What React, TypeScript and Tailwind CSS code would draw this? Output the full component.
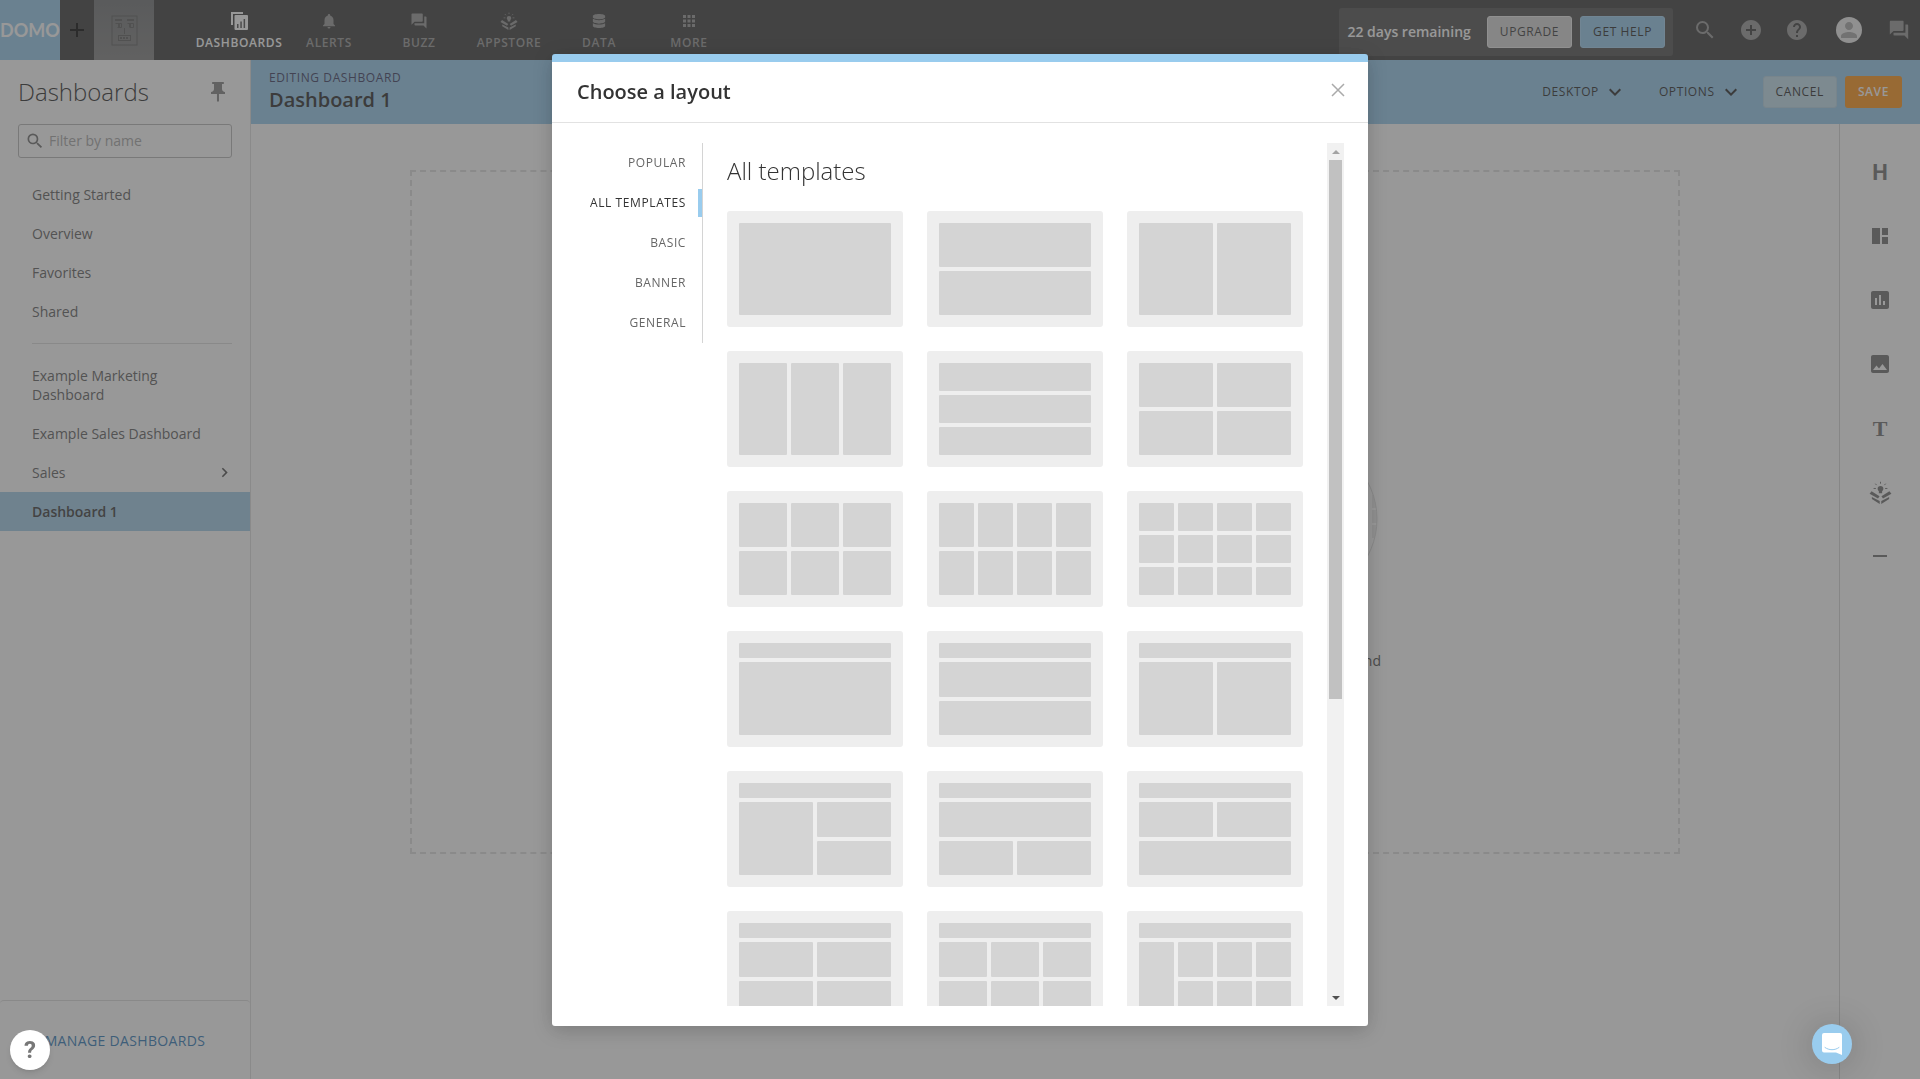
import { useState } from 'react';
import {
  MdAddCircle,
  MdApps,
  MdChevronRight,
  MdForum,
  MdHelp,
  MdImage,
  MdInsertChart,
  MdKeyboardArrowDown,
  MdNotifications,
  MdPerson,
  MdPushPin,
  MdSearch,
} from 'react-icons/md';
import { FaDatabase } from 'react-icons/fa';

interface Template {
  id: string;
  grid: string;
  cells: string[];
}

const fill = (count: number) => Array.from({ length: count }, () => '');

const templates: Template[] = [
  { id: 'single', grid: 'grid-cols-1 grid-rows-1', cells: fill(1) },
  { id: 'two-rows', grid: 'grid-cols-1 grid-rows-2', cells: fill(2) },
  { id: 'two-cols', grid: 'grid-cols-2 grid-rows-1', cells: fill(2) },
  { id: 'three-cols', grid: 'grid-cols-3 grid-rows-1', cells: fill(3) },
  { id: 'three-rows', grid: 'grid-cols-1 grid-rows-3', cells: fill(3) },
  { id: 'two-by-two', grid: 'grid-cols-2 grid-rows-2', cells: fill(4) },
  { id: 'three-by-two', grid: 'grid-cols-3 grid-rows-2', cells: fill(6) },
  { id: 'four-by-two', grid: 'grid-cols-4 grid-rows-2', cells: fill(8) },
  { id: 'four-by-three', grid: 'grid-cols-4 grid-rows-3', cells: fill(12) },
  { id: 'banner-single', grid: 'grid-cols-1 grid-rows-[15px_1fr]', cells: fill(2) },
  { id: 'banner-rows', grid: 'grid-cols-1 grid-rows-[15px_1fr_1fr]', cells: fill(3) },
  { id: 'banner-cols', grid: 'grid-cols-2 grid-rows-[15px_1fr]', cells: ['col-span-2', '', ''] },
  {
    id: 'banner-left-tall',
    grid: 'grid-cols-2 grid-rows-[15px_1fr_1fr]',
    cells: ['col-span-2', 'row-span-2', '', ''],
  },
  {
    id: 'banner-wide-top',
    grid: 'grid-cols-2 grid-rows-[15px_1fr_1fr]',
    cells: ['col-span-2', 'col-span-2', '', ''],
  },
  {
    id: 'banner-wide-bottom',
    grid: 'grid-cols-2 grid-rows-[15px_1fr_1fr]',
    cells: ['col-span-2', '', '', 'col-span-2'],
  },
  {
    id: 'banner-two-by-two',
    grid: 'grid-cols-2 grid-rows-[15px_1fr_1fr]',
    cells: ['col-span-2', ...fill(4)],
  },
  {
    id: 'banner-three-by-two',
    grid: 'grid-cols-3 grid-rows-[15px_1fr_1fr]',
    cells: ['col-span-3', ...fill(6)],
  },
  {
    id: 'banner-four-tall',
    grid: 'grid-cols-4 grid-rows-[15px_1fr_1fr]',
    cells: ['col-span-4', 'row-span-2', ...fill(6)],
  },
];

const categories = ['Popular', 'All templates', 'Basic', 'Banner', 'General'];

function AppstoreIcon({ className }: { className?: string }) {
  return (
    <svg viewBox="0 0 24 24" fill="currentColor" className={className}>
      <path d="M12 5.2a3 3 0 0 1 3 3c0 1.100-.6 1.900-1.300 2.400v2.200h-3.400v-2.200C9.600 10.100 9 9.300 9 8.200a3 3 0 0 1 3-3z" />
      <path d="M2.700 10.700 11 16l-1.600 2.300L.6 13.200zM21.300 10.700 13 16l1.600 2.300 8.800-5.100z" />
      <path d="m3 16.600 8.200 4.200V24L3 18.900zM21 16.600l-8.200 4.200V24l8.200-5.100z" />
      <path
        d="M12 .8v2M6.600 2.800l1.300 1.500M17.400 2.800l-1.300 1.500M4.800 7.800h2.400M16.800 7.800h2.400"
        stroke="currentColor"
        strokeWidth="1"
      />
    </svg>
  );
}

function DashboardsIcon() {
  return (
    <svg viewBox="0 0 17 18" className="h-[18px] w-[17px]">
      <path d="M0 0h12v2H2v11H0z" fill="#fff" />
      <rect x="3.500" y="3" width="13.500" height="15" rx="1" fill="#fff" />
      <path d="M6 12h1.500v4H6zM9.300 9.500h1.500V16H9.300zM12.600 7h1.500v9h-1.500z" fill="#555" />
    </svg>
  );
}

function FaceIcon() {
  return (
    <svg viewBox="0 0 27 31" fill="none" stroke="#626262" className="h-[31px] w-[27px]">
      <rect x="1" y="1" width="25" height="29" strokeWidth="1" />
      <path d="M4 5h7M16 5h7" strokeWidth="2" />
      <path d="M4.500 8.500h6v4h-4M16.500 8.500h6v4h-4" />
      <path d="M8 9v3M19 9v3" strokeWidth="2" />
      <path d="M13.500 13v6" />
      <rect x="7.500" y="20.500" width="12" height="5" />
      <path d="M9 23h9" strokeWidth="2" strokeDasharray="2 1" />
    </svg>
  );
}

function TilesIcon() {
  return (
    <svg viewBox="0 0 16 16" fill="currentColor" className="size-4">
      <path d="M0 0h8v16H0zM10 0h6v7h-6zM10 9h6v7h-6z" />
    </svg>
  );
}

const navItems = [
  { label: 'Dashboards', icon: <DashboardsIcon />, active: true },
  { label: 'Alerts', icon: <MdNotifications className="size-[18px]" /> },
  { label: 'Buzz', icon: <MdForum className="size-[18px]" /> },
  { label: 'Appstore', icon: <AppstoreIcon className="size-[18px]" /> },
  { label: 'Data', icon: <FaDatabase className="size-[14px]" /> },
  { label: 'More', icon: <MdApps className="size-[18px]" /> },
];

const tools = [
  { label: 'Header', icon: <span className="font-[Roboto] text-[22px] font-bold">H</span> },
  { label: 'Layout', icon: <TilesIcon /> },
  { label: 'Chart', icon: <MdInsertChart className="size-6" /> },
  { label: 'Image', icon: <MdImage className="size-6" /> },
  {
    label: 'Text',
    icon: <span className="font-['Liberation_Serif',serif] text-[22px] font-bold">T</span>,
  },
  { label: 'App', icon: <AppstoreIcon className="size-[23px]" /> },
  { label: 'Divider', icon: <span className="h-0.5 w-3.5 bg-current" /> },
];

function TopBar() {
  return (
    <header className="flex h-[60px] shrink-0 items-center bg-[#444]">
      <a
        href="#"
        className="flex size-[60px] items-center justify-center bg-[#99ccee] font-[Lato] text-lg font-bold text-white"
      >
        DOMO
      </a>
      <button aria-label="Add" className="flex h-[60px] w-[34px] items-center justify-center">
        <svg viewBox="0 0 14 14" className="size-3.5">
          <path d="M7 0v14M0 7h14" stroke="#111" strokeWidth="2" />
        </svg>
      </button>
      <div className="flex size-[60px] items-center justify-center bg-linear-to-b from-[#76787a] to-[#868686]">
        <FaceIcon />
      </div>
      <nav className="ml-10 flex">
        {navItems.map((item) => (
          <a
            key={item.label}
            href="#"
            className={`flex w-[90px] flex-col items-center pt-0.5 text-xs font-semibold tracking-wider uppercase ${
              item.active ? 'text-white' : 'text-[#9c9c9c]'
            }`}
          >
            <span className="flex h-6 items-center">{item.icon}</span>
            <span className="leading-5">{item.label}</span>
          </a>
        ))}
      </nav>
      <div className="mt-1 ml-auto flex h-12 items-center gap-2 rounded-[3px] bg-[#585858] px-2">
        <span className="mr-2 text-sm font-semibold text-white">22 days remaining</span>
        <button className="h-8 rounded-[3px] border border-[#eee] bg-[#d8d8d8] px-3 text-xs tracking-wider text-[#444] uppercase">
          Upgrade
        </button>
        <button className="h-8 rounded-[3px] border border-[#a8d6f4] bg-[#99ccee] px-3 text-xs tracking-wider text-[#333] uppercase">
          Get help
        </button>
      </div>
      <div className="ml-5 flex items-center text-[#9c9c9c]">
        <button aria-label="Search" className="mr-[22px]">
          <MdSearch className="size-6" />
        </button>
        <button aria-label="Create" className="mr-[22px]">
          <MdAddCircle className="size-6" />
        </button>
        <button aria-label="Help" className="mr-[27px]">
          <MdHelp className="size-6" />
        </button>
        <button
          aria-label="Profile"
          className="mr-[26px] flex size-[26px] items-center justify-center rounded-full bg-[#eee] text-[#aaa]"
        >
          <MdPerson className="size-6" />
        </button>
        <button aria-label="Messages" className="mr-2.5">
          <MdForum className="size-[22px]" />
        </button>
      </div>
    </header>
  );
}

function Sidebar() {
  const itemClass = 'block py-2.5 pl-8 text-sm leading-[19px] text-[#666]';

  return (
    <aside className="flex w-[251px] shrink-0 flex-col border-r border-[#e0e0e0] bg-white">
      <div className="flex h-16 items-center justify-between pr-5 pl-[18px]">
        <h1 className="text-2xl font-light text-[#333]">Dashboards</h1>
        <MdPushPin className="size-6 text-[#888]" />
      </div>
      <label className="mx-[18px] flex h-[34px] items-center rounded-[3px] border border-[#bbb] pl-1.5">
        <MdSearch className="size-5 shrink-0 text-[#777]" />
        <input
          type="text"
          aria-label="Filter by name"
          placeholder="Filter by name"
          className="ml-1 w-full bg-transparent text-sm outline-none placeholder:text-[#aaa]"
        />
      </label>
      <nav className="mt-[17px]">
        <a href="#" className={itemClass}>Getting Started</a>
        <a href="#" className={itemClass}>Overview</a>
        <a href="#" className={itemClass}>Favorites</a>
        <a href="#" className={itemClass}>Shared</a>
        <hr className="my-3 mr-[18px] ml-8 border-[#ddd]" />
        <a href="#" className={`${itemClass} pr-[50px]`}>Example Marketing Dashboard</a>
        <a href="#" className={itemClass}>Example Sales Dashboard</a>
        <a href="#" className="flex items-center justify-between py-2.5 pr-4 pl-8 text-sm leading-[19px] text-[#666]">
          Sales
          <MdChevronRight className="size-[19px] text-[#555]" />
        </a>
        <a href="#" className="block bg-[#a5cee9] py-2.5 pl-8 text-sm leading-[19px] font-semibold text-[#444]">
          Dashboard 1
        </a>
      </nav>
      <div className="mt-auto flex h-[79px] items-center justify-center rounded-t border-t border-[#ddd] pt-0.5">
        <a href="#" className="text-sm tracking-wide text-[#397fbb] uppercase">
          Manage dashboards
        </a>
      </div>
    </aside>
  );
}

function EditBar() {
  return (
    <div className="flex h-16 shrink-0 items-center bg-[#99ccee] px-[18px] text-[#333]">
      <div>
        <p className="text-xs leading-4 tracking-wider text-[#446] uppercase">Editing dashboard</p>
        <h2 className="text-xl leading-7 font-semibold">Dashboard 1</h2>
      </div>
      <button className="mr-8 ml-auto flex items-center gap-1 text-xs tracking-wider uppercase">
        Desktop
        <MdKeyboardArrowDown className="size-6" />
      </button>
      <button className="mr-5 flex items-center gap-1 text-xs tracking-wider uppercase">
        Options
        <MdKeyboardArrowDown className="size-6" />
      </button>
      <button className="mr-2 h-8 rounded-[3px] border border-[#b8d4e4] bg-[#c4dfee] px-3 text-xs tracking-wider uppercase">
        Cancel
      </button>
      <button className="h-8 rounded-[3px] bg-[#ff9922] px-[13px] text-xs font-semibold tracking-wider text-white uppercase">
        Save
      </button>
    </div>
  );
}

function Canvas() {
  return (
    <div className="flex min-h-0 flex-1">
      <main className="flex-1 pt-[46px]">
        <div className="mx-auto grid h-[684px] w-4/5 grid-cols-[1fr_254px_254px_254px_1fr] border-2 border-dashed border-[#e0e0e0]">
          <div className="col-start-4 flex flex-col items-center pt-[268px]">
            <svg viewBox="0 0 158 158" className="size-[158px]">
              <clipPath id="empty-circle">
                <circle cx="79" cy="79" r="78" />
              </clipPath>
              <g clipPath="url(#empty-circle)" fill="#ececec">
                <path d="M152 55h10v13h-10zM152 70h10v13h-10zM152 85h10v13h-10z" />
              </g>
              <circle cx="79" cy="79" r="78" fill="none" stroke="#ddd" />
            </svg>
            <p className="mt-[53px] w-[164px] text-right text-sm text-[#555]">and</p>
          </div>
        </div>
      </main>
      <div className="flex w-[81px] flex-col items-center border-l border-[#d8d8d8] pt-4 text-[#777]">
        {tools.map((tool) => (
          <button key={tool.label} aria-label={tool.label} className="flex size-16 items-center justify-center">
            {tool.icon}
          </button>
        ))}
      </div>
    </div>
  );
}

function LayoutModal() {
  const [category, setCategory] = useState('All templates');

  return (
    <div className="fixed inset-0 flex items-center justify-center bg-[#444]/55">
      <div
        role="dialog"
        aria-labelledby="layout-title"
        className="mt-[54px] mb-[53px] flex w-[816px] flex-col self-stretch overflow-hidden rounded-[3px] border-t-8 border-[#99ccee] bg-white shadow-[0_4px_20px_rgba(0,0,0,0.2)]"
      >
        <div className="flex h-[61px] shrink-0 items-center justify-between border-b border-[#e2e2e2] pr-[23px] pl-[25px]">
          <h2 id="layout-title" className="text-xl font-semibold text-[#333]">
            Choose a layout
          </h2>
          <button aria-label="Close" className="pb-1">
            <svg viewBox="0 0 14 14" className="size-3.5">
              <path d="M1 1l12 12M13 1L1 13" stroke="#aaa" strokeWidth="1.500" />
            </svg>
          </button>
        </div>
        <div className="flex min-h-0 flex-1 py-5 pr-6">
          <nav className="w-[151px] self-start border-r border-[#d4d4d4]">
            {categories.map((name) => (
              <button
                key={name}
                onClick={() => setCategory(name)}
                className="flex h-10 w-full items-center justify-end text-xs tracking-wider uppercase"
              >
                <span className={category === name ? 'text-[#333]' : 'text-[#666]'}>{name}</span>
                <span className={`ml-3 h-7 w-1 ${category === name ? 'bg-[#99ccee]' : ''}`} />
              </button>
            ))}
          </nav>
          <div className="min-w-0 flex-1 overflow-hidden pl-6">
            <h3 className="mb-6 pt-3 text-2xl leading-8 font-light text-[#333]">{category}</h3>
            <div className="mr-6 grid grid-cols-3 gap-6">
              {templates.map((template) => (
                <button key={template.id} aria-label={template.id} className="h-[116px] rounded-[3px] bg-[#eee] p-3">
                  <span className={`grid h-full gap-1 ${template.grid}`}>
                    {template.cells.map((span, index) => (
                      <span key={index} className={`rounded-[1px] bg-[#d4d4d4] ${span}`} />
                    ))}
                  </span>
                </button>
              ))}
            </div>
          </div>
          <div className="flex w-[17px] flex-col items-center bg-[#f1f1f1]">
            <span className="flex h-[17px] shrink-0 items-center">
              <span className="border-x-4 border-b-4 border-x-transparent border-b-[#a3a3a3]" />
            </span>
            <span className="h-5/8 w-[13px] bg-[#c1c1c1]" />
            <span className="mt-auto flex h-[17px] shrink-0 items-center">
              <span className="border-x-4 border-t-4 border-x-transparent border-t-[#505050]" />
            </span>
          </div>
        </div>
      </div>
    </div>
  );
}

export default function App() {
  return (
    <div className="flex h-screen flex-col overflow-hidden bg-white font-['Open_Sans','Noto_Sans',sans-serif]">
      <TopBar />
      <div className="flex min-h-0 flex-1">
        <Sidebar />
        <div className="flex min-w-0 flex-1 flex-col">
          <EditBar />
          <Canvas />
        </div>
      </div>
      <LayoutModal />
      <button
        aria-label="Get support"
        className="fixed bottom-[9px] left-2.5 flex size-10 items-center justify-center rounded-full bg-white font-[Roboto] text-2xl font-bold text-[#777] shadow-md"
      >
        ?
      </button>
      <button
        aria-label="Open chat"
        className="fixed right-[68px] bottom-[15px] flex size-10 items-center justify-center rounded-full bg-[#99ccee] shadow-[0_2px_36px_rgba(0,0,0,0.2)]"
      >
        <svg viewBox="0 0 20 22" className="h-[22px] w-5">
          <path d="M2 0h16a2 2 0 0 1 2 2v20l-6-2.500H2a2 2 0 0 1-2-2V2a2 2 0 0 1 2-2z" fill="#fff" />
          <path d="M3 14.500c4 3 10 3 14 0" fill="none" stroke="#99ccee" strokeLinecap="round" />
        </svg>
      </button>
    </div>
  );
}
